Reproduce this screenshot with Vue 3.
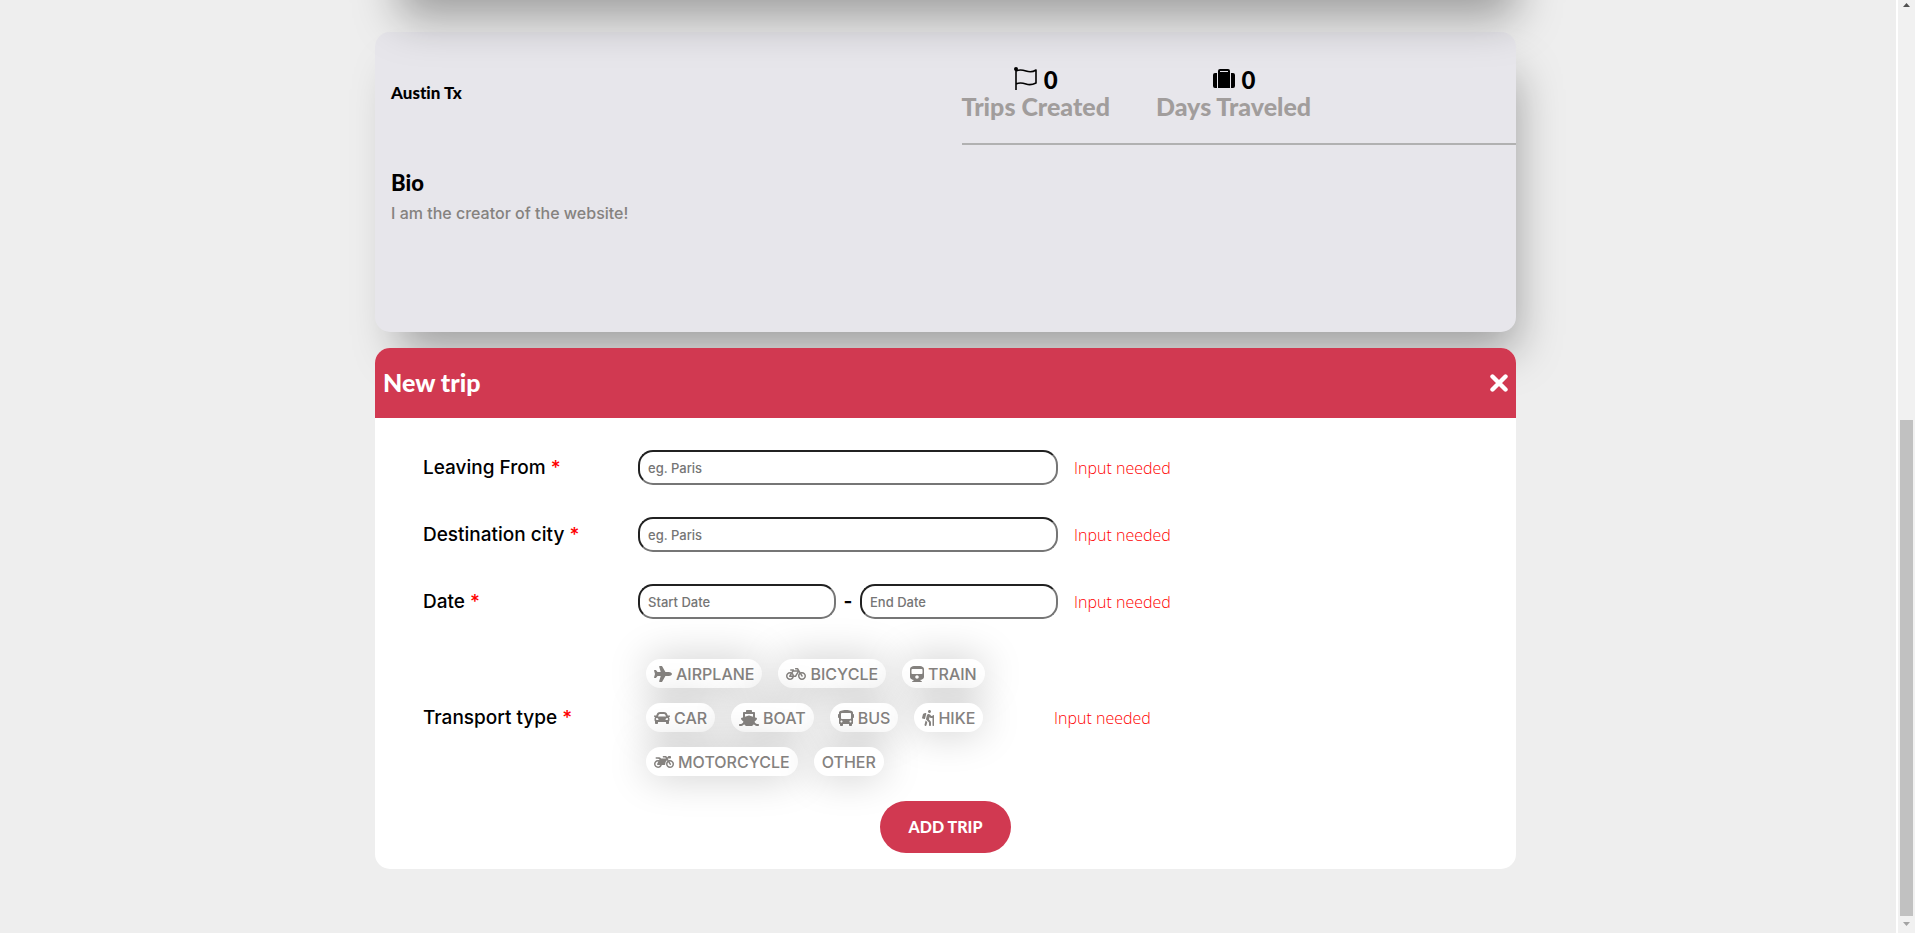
<script setup>
import { reactive } from 'vue'

const stats = [
  { id: 'trips', value: 0, label: 'Trips Created' },
  { id: 'days', value: 0, label: 'Days Traveled' },
]

const cities = [
  { id: 'leaving', label: 'Leaving From' },
  { id: 'destination', label: 'Destination city' },
]

const form = reactive({ leaving: '', destination: '', start: '', end: '', transport: '' })

const transports = [
  { name: 'AIRPLANE', width: 576, path: 'M480 192H365.71L260.61 8.06A16.014 16.014 0 0 0 246.71 0h-65.5c-10.63 0-18.3 10.17-15.38 20.39L214.86 192H112l-43.2-57.6c-3.02-4.03-7.77-6.4-12.8-6.4H16.01C5.6 128-2.04 137.78.49 147.88L32 256 .49 364.12C-2.04 374.22 5.6 384 16.01 384H56c5.04 0 9.78-2.37 12.8-6.4L112 320h102.86l-49.03 171.6c-2.92 10.22 4.75 20.4 15.38 20.4h65.5c5.74 0 11.04-3.08 13.89-8.06L365.71 320H480c35.35 0 96-28.65 96-64s-60.65-64-96-64z' },
  { name: 'BICYCLE', width: 640, path: 'M512.509 192.001c-16.373-.064-32.03 2.955-46.436 8.495l-77.68-125.153A24 24 0 0 0 368.001 64h-64c-8.837 0-16 7.163-16 16v16c0 8.837 7.163 16 16 16h50.649l14.896 24H256.002v-16c0-8.837-7.163-16-16-16h-87.459c-13.441 0-24.777 10.999-24.536 24.437.232 13.044 10.876 23.563 23.995 23.563h48.726l-29.417 47.52c-13.433-4.83-27.904-7.483-42.992-7.52C58.094 191.83.412 249.012.002 319.236-.413 390.279 57.055 448 128.002 448c59.642 0 109.758-40.793 123.967-96h52.033a24 24 0 0 0 20.406-11.367L410.37 201.77l14.938 24.067c-25.455 23.448-41.385 57.081-41.307 94.437.145 68.833 57.899 127.051 126.729 127.719 70.606.685 128.181-55.803 129.255-125.996 1.086-70.941-56.526-129.72-127.476-129.996zM186.75 265.772c9.727 10.529 16.673 23.661 19.642 38.228h-43.306l23.664-38.228zM128.002 400c-44.112 0-80-35.888-80-80s35.888-80 80-80c5.869 0 11.586.653 17.099 1.859l-45.505 73.509C89.715 331.327 101.213 352 120.002 352h81.3c-12.37 28.225-40.562 48-73.3 48zm162.63-96h-35.624c-3.96-31.756-19.556-59.894-42.383-80.026L237.371 184h127.547l-74.286 120zm217.057 95.886c-41.036-2.165-74.049-35.692-75.627-76.755-.812-21.121 6.633-40.518 19.335-55.263l44.433 71.586c4.66 7.508 14.524 9.816 22.032 5.156l13.594-8.437c7.508-4.66 9.817-14.524 5.156-22.032l-44.468-71.643a79.901 79.901 0 0 1 19.858-2.497c44.112 0 80 35.888 80 80-.001 45.54-38.252 82.316-84.313 79.885z' },
  { name: 'TRAIN', width: 448, path: 'M448 96v256c0 51.815-61.624 96-130.022 96l62.98 49.721C386.905 502.417 383.562 512 376 512H72c-7.578 0-10.892-9.594-4.957-14.279L130.022 448C61.82 448 0 403.954 0 352V96C0 42.981 64 0 128 0h192c65 0 128 42.981 128 96zm-48 136V120c0-13.255-10.745-24-24-24H72c-13.255 0-24 10.745-24 24v112c0 13.255 10.745 24 24 24h304c13.255 0 24-10.745 24-24zm-176 64c-30.928 0-56 25.072-56 56s25.072 56 56 56 56-25.072 56-56-25.072-56-56-56z' },
  { name: 'CAR', width: 512, path: 'M499.99 176h-59.87l-16.64-41.6C406.38 91.63 365.57 64 319.5 64h-127c-46.06 0-86.88 27.63-103.99 70.4L71.87 176H12.01C4.2 176-1.53 183.34.37 190.91l6 24C7.7 220.25 12.5 224 18.01 224h20.07C24.65 235.73 16 252.78 16 272v48c0 16.12 6.16 30.67 16 41.93V416c0 17.67 14.33 32 32 32h32c17.67 0 32-14.33 32-32v-32h256v32c0 17.67 14.33 32 32 32h32c17.67 0 32-14.33 32-32v-54.07c9.84-11.25 16-25.8 16-41.93v-48c0-19.22-8.65-36.27-22.07-48H494c5.51 0 10.31-3.75 11.64-9.09l6-24c1.89-7.57-3.84-14.91-11.65-14.91zm-352.06-17.83c7.29-18.22 24.94-30.17 44.57-30.17h127c19.63 0 37.28 11.95 44.57 30.17L384 208H128l19.93-49.83zM96 319.8c-19.2 0-32-12.76-32-31.9S76.8 256 96 256s48 28.71 48 47.85-28.8 15.95-48 15.95zm320 0c-19.2 0-48 3.19-48-15.95S396.8 256 416 256s32 12.76 32 31.9-12.8 31.9-32 31.9z' },
  { name: 'BOAT', width: 640, path: 'M496.616 372.639l70.012-70.012c16.899-16.9 9.942-45.771-12.836-53.092L512 236.102V96c0-17.673-14.327-32-32-32h-64V24c0-13.255-10.745-24-24-24H248c-13.255 0-24 10.745-24 24v40h-64c-17.673 0-32 14.327-32 32v140.102l-41.792 13.433c-22.753 7.313-29.754 36.173-12.836 53.092l70.012 70.012C125.828 416.287 85.587 448 24 448c-13.255 0-24 10.745-24 24v16c0 13.255 10.745 24 24 24 61.023 0 107.499-20.61 143.258-59.396C181.677 487.432 216.021 512 256 512h128c39.979 0 74.323-24.568 88.742-59.396C508.495 491.384 554.968 512 616 512c13.255 0 24-10.745 24-24v-16c0-13.255-10.745-24-24-24-60.817 0-101.542-31.001-119.384-75.361zM192 128h256v87.531l-118.208-37.995a31.995 31.995 0 0 0-19.584 0L192 215.531V128z' },
  { name: 'BUS', width: 512, path: 'M488 128h-8V80c0-44.8-99.2-80-224-80S32 35.2 32 80v48h-8c-13.25 0-24 10.74-24 24v80c0 13.25 10.75 24 24 24h8v160c0 17.67 14.33 32 32 32v32c0 17.67 14.33 32 32 32h32c17.67 0 32-14.33 32-32v-32h192v32c0 17.67 14.33 32 32 32h32c17.67 0 32-14.33 32-32v-32h6.4c16 0 25.6-12.8 25.6-25.6V256h8c13.25 0 24-10.75 24-24v-80c0-13.26-10.75-24-24-24zM112 400c-17.67 0-32-14.33-32-32s14.33-32 32-32 32 14.33 32 32-14.33 32-32 32zm16-112c-17.67 0-32-14.33-32-32V128c0-17.67 14.33-32 32-32h256c17.67 0 32 14.33 32 32v128c0 17.67-14.33 32-32 32H128zm272 112c-17.67 0-32-14.33-32-32s14.33-32 32-32 32 14.33 32 32-14.33 32-32 32z' },
  { name: 'HIKE', width: 384, path: 'M80.95 472.23c-4.28 17.16 6.14 34.53 23.28 38.81 2.61.66 5.22.95 7.8.95 14.33 0 27.37-9.7 31.02-24.23l25.24-100.97-52.78-52.78-34.56 138.22zm14.89-196.12L137 117c2.19-8.42-3.14-16.95-11.92-19.06-43.88-10.52-88.35 15.07-99.32 57.17L.49 253.24c-2.19 8.42 3.14 16.95 11.92 19.06l63.56 15.25c8.79 2.1 17.68-3.02 19.87-11.44zM368 160h-16c-8.84 0-16 7.16-16 16v16h-34.75l-46.78-46.78C243.38 134.11 228.61 128 212.91 128c-27.02 0-50.47 18.3-57.03 44.52l-26.92 107.72a32.012 32.012 0 0 0 8.42 30.39L224 397.25V480c0 17.67 14.33 32 32 32s32-14.33 32-32v-82.75c0-17.09-6.66-33.16-18.75-45.25l-46.82-46.82c.15-.5.49-.89.62-1.41l19.89-79.57 22.43 22.43c6 6 14.14 9.38 22.62 9.38h48v240c0 8.84 7.16 16 16 16h16c8.84 0 16-7.16 16-16V176c.01-8.84-7.15-16-15.99-16zM240 96c26.51 0 48-21.49 48-48S266.51 0 240 0s-48 21.49-48 48 21.49 48 48 48z' },
  { name: 'MOTORCYCLE', width: 640, path: 'M512.9 192c-14.9-.1-29.1 2.3-42.4 6.9L437.6 144H520c13.3 0 24-10.7 24-24V88c0-13.3-10.7-24-24-24h-45.3c-6.8 0-13.3 2.9-17.8 7.9l-37.5 41.7-22.8-38C392.2 68.4 384.4 64 376 64h-80c-8.8 0-16 7.2-16 16v16c0 8.8 7.2 16 16 16h66.4l19.2 32H227.9c-17.7-23.1-44.9-40-99.9-40H72.5C59 104 47.7 115 48 128.5c.2 13 10.9 23.5 24 23.5h56c24.5 0 38.7 10.9 47.8 24.8l-11.3 20.5c-13-3.9-26.9-5.7-41.3-5.2C55.9 194.5 1.6 249.6 0 317c-1.6 72.1 56.3 131 128 131 59.6 0 109.7-40.8 124-96h84.2c13.7 0 24.6-11.4 24-25.1-2.1-47.1 17.5-93.7 56.2-125l12.5 20.8c-27.6 23.7-45.1 58.9-44.8 98.2.5 69.6 57.2 126.5 126.8 127.1 71.6.7 129.8-57.5 129.2-129.1-.7-69.6-57.6-126.4-127.2-126.9zM128 400c-44.1 0-80-35.9-80-80s35.9-80 80-80c4.2 0 8.4.3 12.5 1L99 316.4c-8.8 16 2.8 35.6 21 35.6h81.3c-12.4 28.2-40.6 48-73.3 48zm463.9-75.6c-2.2 40.6-35 73.4-75.5 75.5-46.1 2.5-84.4-34.3-84.4-79.9 0-21.4 8.4-40.8 22.1-55.1l49.4 82.4c4.5 7.6 14.4 10 22 5.5l13.7-8.2c7.6-4.5 10-14.4 5.5-22l-48.6-80.9c5.2-1.1 10.5-1.6 15.9-1.6 45.6-.1 82.3 38.2 79.9 84.3z' },
  { name: 'OTHER' },
]
</script>

<template>
  <div class="window">
    <main class="page">
      <div class="column">
        <div class="cover"></div>

        <section class="profile">
          <p class="location">Austin Tx</p>
          <div class="stats">
            <div v-for="stat in stats" :key="stat.id" class="stat">
              <div class="stat-value">
                <svg v-if="stat.id === 'trips'" width="24" height="24" viewBox="0 0 24 24" fill="none" stroke="currentColor" stroke-width="1.6" stroke-linejoin="round" aria-hidden="true">
                  <circle cx="2" cy="2" r="2" fill="currentColor" stroke="none" />
                  <path d="M2 2V23M2 4C6 2 9 3 12 4C15 5 19 5 22 3V16C18 18 15 18 12 17C9 16 6 15 2 17" />
                </svg>
                <svg v-else width="24" height="24" viewBox="0 0 24 24" fill="currentColor" aria-hidden="true">
                  <path d="M3 6H5V21H3Q1 21 1 19V8Q1 6 3 6zM19 6h2q2 0 2 2v11q0 2-2 2h-2z" />
                  <path fill-rule="evenodd" d="M6 5V4Q6 2 8 2H16Q18 2 18 4V21H6zM8 4V5H16V4z" />
                </svg>
                <span>{{ stat.value }}</span>
              </div>
              <div class="stat-label">{{ stat.label }}</div>
            </div>
          </div>
          <div class="bio">
            <h2>Bio</h2>
            <p>I am the creator of the website!</p>
          </div>
        </section>

        <section class="trip">
          <header class="trip-header">
            <h1>New trip</h1>
            <button type="button" class="close" aria-label="Close">
              <svg width="18" height="18" viewBox="0 0 18 18" fill="none" stroke="currentColor" stroke-width="4.400" stroke-linecap="round" aria-hidden="true">
                <path d="M2.500 2.500L15.500 15.500M15.500 2.500L2.500 15.500" />
              </svg>
            </button>
          </header>

          <form class="trip-form" @submit.prevent>
            <div v-for="city in cities" :key="city.id" class="row">
              <label class="name" :for="city.id">{{ city.label }} <span class="star">*</span></label>
              <div class="field">
                <input :id="city.id" v-model="form[city.id]" type="text" placeholder="eg. Paris" />
              </div>
              <span class="error">Input needed</span>
            </div>

            <div class="row">
              <label class="name" for="start">Date <span class="star">*</span></label>
              <div class="field">
                <input id="start" v-model="form.start" type="text" placeholder="Start Date" />
                <span class="dash">-</span>
                <input id="end" v-model="form.end" type="text" placeholder="End Date" aria-label="End Date" />
              </div>
              <span class="error">Input needed</span>
            </div>

            <div class="row transport">
              <span id="transport" class="name">Transport type <span class="star">*</span></span>
              <div class="chips" role="group" aria-labelledby="transport">
                <button v-for="item in transports" :key="item.name" type="button" class="chip" @click="form.transport = item.name">
                  <svg v-if="item.path" height="16" :viewBox="`0 0 ${item.width} 512`" fill="currentColor" aria-hidden="true">
                    <path :d="item.path" />
                  </svg>
                  <span>{{ item.name }}</span>
                </button>
              </div>
              <span class="error">Input needed</span>
            </div>

            <button type="submit" class="submit">ADD TRIP</button>
          </form>
        </section>
      </div>
    </main>

    <div class="scrollbar" aria-hidden="true">
      <svg width="17" height="17" viewBox="0 0 17 17" fill="#505050"><path d="M5 7H12L8.500 3z" /></svg>
      <div class="track"><div class="thumb"></div></div>
      <svg width="17" height="17" viewBox="0 0 17 17" fill="#a3a3a3"><path d="M5 6H12L8.500 10z" /></svg>
    </div>
  </div>
</template>

<style>
body {
  margin: 0;
  overflow: hidden;
}
</style>

<style scoped>
.window {
  --display: Lato, "Liberation Sans", sans-serif;
  --body: Inter, Roboto, "Liberation Sans", sans-serif;
  --lift: 12px 30px 45px -12px rgba(0, 0, 0, 0.34);
  display: flex;
  height: 100vh;
  overflow: hidden;
  font-family: var(--body);
  font-size: 16px;
  font-weight: 500;
  font-variant-ligatures: none;
}

h1,
h2,
p {
  margin: 0;
}

.page {
  flex: 1;
  overflow: hidden;
  box-sizing: border-box;
  padding-right: 5px;
  background: #eee;
  border-right: 2px solid #fff;
}

.column {
  max-width: 1141px;
  margin: 0 auto;
}

.cover {
  position: relative;
  z-index: 1;
  height: 300px;
  margin: -300px 0 32px;
  border-radius: 15px;
  box-shadow: var(--lift);
}

.profile {
  display: grid;
  grid-template-columns: 1fr 1fr;
  grid-template-rows: 113px auto;
  box-sizing: border-box;
  min-height: 300px;
  border-radius: 15px;
  background: #e7e6eb;
  box-shadow: var(--lift);
}

.location {
  align-self: center;
  padding: 8px 16px 0;
  font-family: var(--display);
  font-size: 17px;
  font-weight: 900;
  line-height: 20px;
}

.stats {
  display: flex;
  gap: 46px;
  margin-left: 16px;
  padding-top: 33px;
  box-sizing: border-box;
  border-bottom: 2px solid #b1b1b1;
  font-family: var(--display);
  font-size: 25px;
  font-weight: 900;
}

.stat-value {
  display: flex;
  justify-content: center;
  align-items: center;
  gap: 6px;
  height: 28px;
  font-size: 24px;
}

.stat-label {
  line-height: 26px;
  color: #a19d9c;
}

.bio {
  padding: 24px 16px;
}

.bio h2 {
  font-family: var(--display);
  font-size: 22px;
  font-weight: 900;
  line-height: 28px;
}

.bio p {
  padding-top: 4px;
  line-height: 24px;
  color: #85827f;
}

.trip {
  position: relative;
  margin-top: 16px;
  border-radius: 15px;
  background: #fff;
}

.trip-header {
  display: flex;
  align-items: center;
  justify-content: space-between;
  height: 70px;
  padding: 0 8px;
  border-radius: 15px 15px 0 0;
  background: #d13951;
  color: #fff;
}

.trip-header h1 {
  padding-bottom: 2px;
  font-family: var(--display);
  font-size: 25px;
  font-weight: 900;
  line-height: 32px;
}

.close {
  display: flex;
  padding: 0;
  border: 0;
  background: none;
  color: inherit;
}

.trip-form {
  padding: 32px 48px 16px;
}

.row {
  display: flex;
  align-items: center;
  margin-bottom: 32px;
}

.name {
  width: 215px;
  font-size: 19px;
  line-height: 24px;
}

.star,
.error {
  color: #f00;
}

.field {
  display: flex;
  align-items: center;
  width: 420px;
}

.field input {
  flex: 1;
  min-width: 0;
  height: 35px;
  box-sizing: border-box;
  padding: 0 8px;
  border: 2px inset #767676;
  border-radius: 15px;
  background: #fff;
  font: 500 13px/20px var(--body);
}

.field input::placeholder {
  color: #757575;
}

.dash {
  width: 24px;
  text-align: center;
  font-size: 19px;
  font-weight: 700;
}

.error {
  margin-left: 16px;
  font: 300 16px/24px "Open Sans", "Noto Sans", sans-serif;
}

.transport {
  margin-bottom: 17px;
}

.chips {
  display: flex;
  flex-wrap: wrap;
  gap: 15px 16px;
  box-sizing: border-box;
  width: 400px;
  padding: 8px;
}

.chip {
  display: flex;
  align-items: center;
  gap: 4px;
  height: 29px;
  padding: 0 8px;
  border: 0;
  border-radius: 15px;
  background: #fff;
  box-shadow: 0 0 40px rgba(0, 0, 0, 0.22);
  font: 500 16px/20px var(--body);
  color: #85827f;
}

.submit {
  display: block;
  height: 52px;
  margin: 0 auto;
  padding: 0 29px;
  border: 0;
  border-radius: 26px;
  background: #d13951;
  color: #fff;
  font: 900 16px/20px var(--display);
}

.scrollbar {
  display: flex;
  flex-direction: column;
  width: 17px;
  background: #f1f1f1;
}

.track {
  display: flex;
  flex-direction: column;
  justify-content: flex-end;
  flex: 1;
  padding: 0 2px;
}

.thumb {
  height: 55.2%;
  background: #c1c1c1;
}
</style>
